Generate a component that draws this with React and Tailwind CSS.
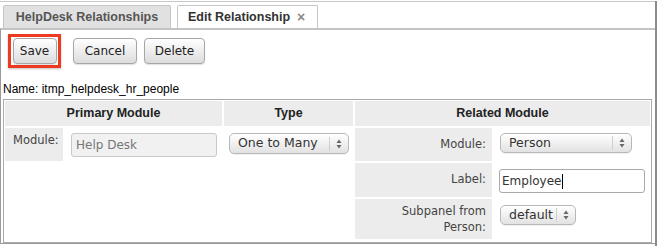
import React from "react";

const ui = { fontFamily: '"DejaVu Sans", Verdana, sans-serif' };
const arial = { fontFamily: '"Liberation Sans", Arial, Helvetica, sans-serif' };

function Arrows() {
  return (
    <svg width="6" height="10" viewBox="0 0 6 10" className="text-[#666]">
      <path d="M3 0.5 L5.5 4 L0.5 4 Z" fill="currentColor" />
      <path d="M3 9.5 L5.5 6 L0.5 6 Z" fill="currentColor" />
    </svg>
  );
}

function FakeSelect({ value, width, height = 20 }) {
  return (
    <div
      className="flex items-center rounded-[5px] border border-[#b8b8b8] bg-linear-to-b from-white to-[#e2e2e2] text-[12.5px] text-[#333] shadow-[0_1px_0_rgba(0,0,0,0.06)]"
      style={{ ...ui, width, height }}
    >
      <span className="flex-1 pl-[8px] leading-none">{value}</span>
      <span className="flex h-[14px] w-[19px] items-center justify-center border-l border-[#cfcfcf]">
        <Arrows />
      </span>
    </div>
  );
}

function Btn({ children, w }) {
  return (
    <button
      className="flex h-[26px] items-center justify-center rounded-[4px] border border-[#a6a6a6] bg-linear-to-b from-white to-[#dcdcdc] text-[12px] text-[#222] shadow-[0_1px_1px_rgba(0,0,0,0.12)]"
      style={{ ...ui, width: w }}
    >
      {children}
    </button>
  );
}

export default function App() {
  return (
    <div className="h-[246px] w-[658px] overflow-hidden bg-white">
      <div className="h-[245px] w-[657px] border-r-2 border-r-[#8c8c8c]">
        {/* top rule */}
        <div className="mt-px h-px bg-[#c8c8c8]" />

        {/* Tabs */}
        <div className="flex pt-[3px] pl-[3px]" style={arial}>
          <div className="flex h-[23px] w-[168px] items-center justify-center rounded-t-[2px] border border-b-0 border-[#c6c6c6] bg-[#e1e1e1] text-[12.5px] font-bold text-[#555]">
            HelpDesk Relationships
          </div>
          <div className="ml-[6px] flex h-[23px] w-[141px] items-center rounded-t-[2px] border border-b-0 border-[#c6c6c6] bg-white pl-[10px] text-[12.5px] font-bold text-[#333]">
            Edit Relationship
            <span className="ml-[7px] text-[14px] font-bold text-[#8a8a8a]">×</span>
          </div>
        </div>

        {/* Panel */}
        <div className="h-[216px] border-t-2 border-b border-l border-t-[#c4c4c4] border-b-[#9a9a9a] border-l-[#9a9a9a]">
          {/* Buttons */}
          <div className="mt-[4px] flex h-[34px] items-center pl-[7px]">
            <div className="flex h-[34px] w-[53px] items-center justify-center border-[3px] border-[#ef3a22] shadow-[0_1px_2px_rgba(0,0,0,0.25)]">
              <Btn w={44}>Save</Btn>
            </div>
            <div className="ml-[12px]">
              <Btn w={64}>Cancel</Btn>
            </div>
            <div className="ml-[7px]">
              <Btn w={61}>Delete</Btn>
            </div>
          </div>

          {/* Name */}
          <div className="mt-[14px] pl-[2px] text-[12px] leading-[14px] text-black" style={arial}>
            Name: itmp_helpdesk_hr_people
          </div>

          {/* Table */}
          <div className="ml-[2px] mt-[3px] grid w-[649px] grid-cols-[58px_157px_129px_137px_156px] grid-rows-[25px_33px_34px_40px] gap-[2px] border border-[#a9a9a9] p-px pb-[3px]">
            {/* header */}
            <div className="col-span-2 flex items-center justify-center bg-[#ececec] text-[12.5px] font-bold text-[#222]" style={arial}>
              Primary Module
            </div>
            <div className="flex items-center justify-center bg-[#ececec] text-[12.5px] font-bold text-[#222]" style={arial}>
              Type
            </div>
            <div className="col-span-2 flex items-center justify-center bg-[#ececec] text-[12.5px] font-bold text-[#222]" style={arial}>
              Related Module
            </div>

            {/* row 1 */}
            <div className="bg-[#ececec] pt-[4px] pl-[8px] text-[11.5px] leading-[16px] text-[#444]" style={ui}>
              Module:
            </div>
            <div className="pt-[5px] pl-[6px]">
              <div
                className="flex h-[24px] w-[146px] items-center rounded-[3px] border border-[#c8c8c8] bg-[#f1f1f1] pl-[4px] text-[12px] text-[#777]"
                style={ui}
              >
                Help Desk
              </div>
            </div>
            <div className="pt-[5px] pl-[5px]">
              <FakeSelect value="One to Many" width={120} height={21} />
            </div>
            <div className="flex items-center justify-end bg-[#ececec] pr-[6px] text-[11.5px] text-[#444]" style={ui}>
              Module:
            </div>
            <div className="pt-[5px] pl-[6px]">
              <FakeSelect value="Person" width={132} />
            </div>

            {/* row 2 */}
            <div className="col-start-4 flex items-center justify-end bg-[#ececec] pr-[6px] text-[11.5px] text-[#444]" style={ui}>
              Label:
            </div>
            <div className="pt-[6px] pl-[5px]">
              <div
                className="flex h-[24px] w-[146px] items-center rounded-[3px] border border-[#a9a9a9] bg-white pl-[2px] text-[12px] text-[#333]"
                style={ui}
              >
                Employee
                <span className="ml-px h-[15px] w-px bg-black" />
              </div>
            </div>

            {/* row 3 */}
            <div
              className="col-start-4 flex items-center justify-end bg-[#ececec] pr-[6px] text-right text-[11.5px] leading-[16px] text-[#444]"
              style={ui}
            >
              Subpanel from
              <br />
              Person:
            </div>
            <div className="pt-[6px] pl-[6px]">
              <FakeSelect value="default" width={76} />
            </div>
          </div>
        </div>
      </div>
    </div>
  );
}
